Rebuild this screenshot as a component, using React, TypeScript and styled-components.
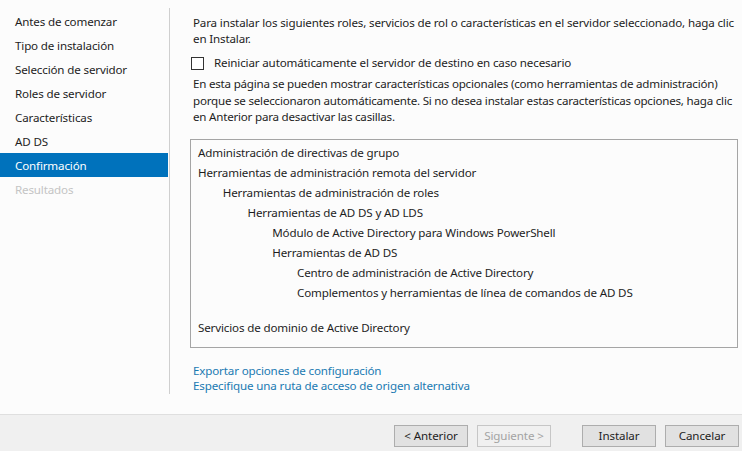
import React, { useState } from 'react'
import styled, { createGlobalStyle } from 'styled-components'

const GlobalStyle = createGlobalStyle`
  html, body {
    margin: 0;
    padding: 0;
    background: #fcfcfc;
  }
  body {
    font-family: 'Noto Sans', 'Open Sans', sans-serif;
    font-size: 11.6px;
    letter-spacing: -0.15px;
    color: #1e1e1e;
  }
`

type Step = { label: string, selected?: boolean, disabled?: boolean }

const steps: Step[] = [
  { label: 'Antes de comenzar' },
  { label: 'Tipo de instalación' },
  { label: 'Selección de servidor' },
  { label: 'Roles de servidor' },
  { label: 'Características' },
  { label: 'AD DS' },
  { label: 'Confirmación', selected: true },
  { label: 'Resultados', disabled: true },
]

type Feature = { text: string, level: number, gap?: boolean }

const features: Feature[] = [
  { text: 'Administración de directivas de grupo', level: 0 },
  { text: 'Herramientas de administración remota del servidor', level: 0 },
  { text: 'Herramientas de administración de roles', level: 1 },
  { text: 'Herramientas de AD DS y AD LDS', level: 2 },
  { text: 'Módulo de Active Directory para Windows PowerShell', level: 3 },
  { text: 'Herramientas de AD DS', level: 3 },
  { text: 'Centro de administración de Active Directory', level: 4 },
  { text: 'Complementos y herramientas de línea de comandos de AD DS', level: 4 },
  { text: 'Servicios de dominio de Active Directory', level: 0, gap: true },
]

const App = () => {
  const [restart, setRestart] = useState<boolean>(false)

  return (
    <>
      <GlobalStyle />
      <Wizard>
        <Main>
          <Nav>
            {steps.map(step => (
              <NavItem key={step.label} $selected={step.selected} $disabled={step.disabled}>
                {step.label}
              </NavItem>
            ))}
          </Nav>
          <Content>
            <Intro>
              Para instalar los siguientes roles, servicios de rol o características en el servidor seleccionado, haga clic<br />
              en Instalar.
            </Intro>
            <CheckRow onClick={() => setRestart(!restart)}>
              <CheckBox $checked={restart} />
              Reiniciar automáticamente el servidor de destino en caso necesario
            </CheckRow>
            <Note>
              En esta página se pueden mostrar características opcionales (como herramientas de administración)<br />
              porque se seleccionaron automáticamente. Si no desea instalar estas características opciones, haga clic<br />
              en Anterior para desactivar las casillas.
            </Note>
            <FeatureBox>
              {features.map(f => (
                <FeatureRow key={f.text} $level={f.level} $gap={f.gap}>{f.text}</FeatureRow>
              ))}
            </FeatureBox>
            <Links>
              <LinkText>Exportar opciones de configuración</LinkText>
              <LinkText>Especifique una ruta de acceso de origen alternativa</LinkText>
            </Links>
          </Content>
        </Main>
        <Footer>
          <Button>&lt; Anterior</Button>
          <Button disabled>Siguiente &gt;</Button>
          <Button $wide>Instalar</Button>
          <Button>Cancelar</Button>
        </Footer>
      </Wizard>
    </>
  )
}

const Wizard = styled.div`
  width: 742px;
  height: 451px;
  display: flex;
  flex-direction: column;
  overflow: hidden;
`

const Main = styled.div`
  flex: 1;
  display: flex;
  flex-direction: row;
  min-height: 0;
`

const Nav = styled.div`
  width: 169px;
  flex-shrink: 0;
  margin: 8px 0 20px;
  padding-top: 1px;
  border-right: 1px solid #cfcfcf;
  display: flex;
  flex-direction: column;
`

const NavItem = styled.div<{ $selected?: boolean, $disabled?: boolean }>`
  height: 24px;
  line-height: 25px;
  padding-left: 15px;
  margin-right: 1px;
  background: ${({ $selected }) => $selected ? '#0072bc' : 'transparent'};
  color: ${({ $selected, $disabled }) => $selected ? '#fff' : $disabled ? '#c4c4c4' : '#1e1e1e'};
`

const Content = styled.div`
  flex: 1;
  padding: 15px 0 0 20px;
  display: flex;
  flex-direction: column;
`

const Intro = styled.p`
  margin: 0 0 0 3px;
  line-height: 16px;
  white-space: nowrap;
`

const CheckRow = styled.label`
  display: flex;
  align-items: center;
  gap: 10px;
  height: 18px;
  margin: 7px 0 0 1px;
  line-height: 16px;
  cursor: default;
`

const CheckBox = styled.span<{ $checked: boolean }>`
  width: 11px;
  height: 11px;
  border: 1px solid #333;
  background: #fff;
  ${({ $checked }) => $checked && 'background: #0072bc;'}
`

const Note = styled.p`
  margin: 4px 0 0 3px;
  line-height: 16.5px;
  letter-spacing: -0.22px;
  white-space: nowrap;
`

const FeatureBox = styled.div`
  margin: 13px 4px 0 0;
  height: 209px;
  border: 1px solid #a5a5a5;
  background: #fcfcfc;
  padding-top: 3px;
  box-sizing: border-box;
  display: flex;
  flex-direction: column;
`

const FeatureRow = styled.div<{ $level: number, $gap?: boolean }>`
  height: 20px;
  line-height: 20px;
  padding-left: ${({ $level }) => 7 + $level * 24.75}px;
  margin-top: ${({ $gap }) => $gap ? '15px' : '0'};
  white-space: nowrap;
`

const Links = styled.div`
  margin: 15px 0 0 3px;
  display: flex;
  flex-direction: column;
`

const LinkText = styled.span`
  line-height: 15px;
  color: #1a7ab2;
  cursor: pointer;
`

const Footer = styled.div`
  height: 37px;
  box-sizing: border-box;
  flex-shrink: 0;
  border-top: 1px solid #dfdfdf;
  background: #f0f0f0;
  display: flex;
  align-items: center;
  justify-content: flex-end;
  padding: 5px 3px 0 0;
  gap: 9px;
`

const Button = styled.button<{ $wide?: boolean }>`
  width: 74px;
  height: 22px;
  padding: 0;
  font-family: inherit;
  font-size: 11.6px;
  letter-spacing: -0.1px;
  color: #1e1e1e;
  background: #e1e1e1;
  border: 1px solid #adadad;
  margin-left: ${({ $wide }) => $wide ? '22px' : '0'};
  &:disabled {
    background: #f0f0f0;
    border-color: #c6c6c6;
    color: #a3a3a3;
  }
`

export default App
